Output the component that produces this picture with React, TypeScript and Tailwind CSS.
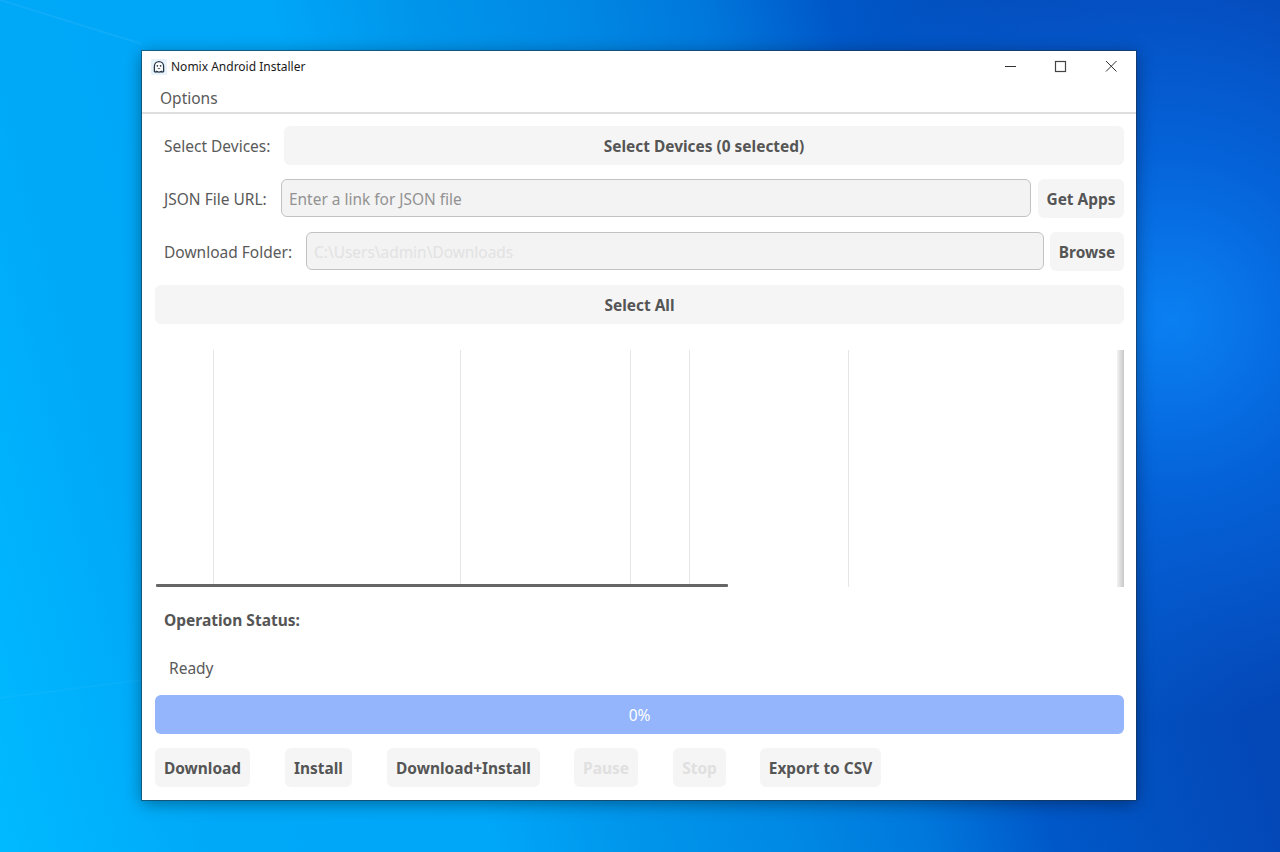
import React from "react";

const font = { fontFamily: '"Noto Sans", "Open Sans", sans-serif' };

function Btn({ children, className = "", disabled = false }: { children: React.ReactNode; className?: string; disabled?: boolean }) {
  return (
    <div
      className={
        "flex h-[39px] shrink-0 items-center justify-center rounded-[6px] bg-[#f5f5f5] pt-[2px] text-[15.45px] font-bold " +
        (disabled ? "text-[#e0e0e0] " : "text-[#555555] ") +
        className
      }
    >
      {children}
    </div>
  );
}

function Field({ text, muted }: { text: string; muted?: boolean }) {
  return (
    <div
      className={
        "flex h-[38px] min-w-0 flex-1 items-center self-start rounded-[6px] border border-[#c2c2c2] bg-[#f3f3f3] px-[7px] pt-[4px] text-[15.45px] " +
        (muted ? "text-[#e2e2e2]" : "text-[#929292]")
      }
    >
      {text}
    </div>
  );
}

export default function App() {
  return (
    <div
      className="relative h-[852px] w-[1280px] overflow-hidden bg-[radial-gradient(circle_at_1170px_320px,#0a80f2_0px,#0562d8_170px,rgba(5,85,205,0)_400px),linear-gradient(75deg,#00baff_0%,#00a8f8_15%,#00a6f8_33%,#0096ec_42%,#0088e4_53%,#0078dc_61.5%,#0058c8_70%,#0448b8_85%,#0444b4_100%)] pl-[142px] pt-[51px]"
      style={font}
    >
      <svg className="absolute left-0 top-0" width="142" height="852" viewBox="0 0 142 852">
        <path d="M0 0L142 44" stroke="#ffffff" strokeOpacity="0.06" strokeWidth="2" fill="none" />
        <path d="M0 698L142 680" stroke="#ffffff" strokeOpacity="0.03" strokeWidth="2" fill="none" />
      </svg>
      <div className="relative flex h-[749px] w-[994px] flex-col bg-white shadow-[0_0_0_1px_rgba(30,50,70,0.55),0_3px_16px_rgba(0,0,0,0.4)]">
        {/* Title bar */}
        <div className="flex h-[31px] shrink-0 items-center pl-[9px] text-[12px] text-[#1a1a1a]">
          <svg width="16" height="16" viewBox="0 0 16 16" className="mr-[4px] shrink-0">
            <rect width="16" height="16" rx="1" fill="#e8f2fb" />
            <path d="M3.4 12.5V7.2a4.6 4.6 0 0 1 9.2 0v5.3c-1 .7-2 .2-2.3-.2-.6.6-1.7.9-2.3.9s-1.7-.3-2.3-.9c-.3.4-1.3.9-2.3.2z" fill="#fff" stroke="#24364a" strokeWidth="1.3" strokeLinejoin="round" />
            <circle cx="6.4" cy="6.8" r="0.85" fill="#24364a" />
            <circle cx="9.6" cy="6.8" r="0.85" fill="#24364a" />
            <path d="M6.8 9.6h2.4" stroke="#24364a" strokeWidth="0.8" />
          </svg>
          <span>Nomix Android Installer</span>
          <div className="ml-auto flex items-center">
            <svg width="50" height="30" viewBox="0 0 50 30">
              <path d="M13 14.5h11" stroke="#333" strokeWidth="1" />
            </svg>
            <svg width="50" height="30" viewBox="0 0 50 30">
              <rect x="13.5" y="9.5" width="10" height="10" fill="none" stroke="#444" strokeWidth="1.2" />
            </svg>
            <svg width="44" height="30" viewBox="0 0 44 30">
              <path d="M14 9l10.5 10.5M24.5 9L14 19.5" stroke="#333" strokeWidth="1" fill="none" />
            </svg>
          </div>
        </div>

        {/* Menu */}
        <div className="flex h-[32px] shrink-0 items-center border-b-2 border-[#dedede] pl-[18px] pt-[4px] text-[15.5px] text-[#5a5a5a]">
          Options
        </div>

        {/* Content */}
        <div className="flex min-h-0 flex-1 flex-col pl-[13px] pr-[12px] pt-[12px]">
          <div className="flex items-center">
            <span className="w-[129px] shrink-0 pl-[9px] pt-[2px] text-[15.5px] text-[#5a5a5a]">Select Devices:</span>
            <Btn className="flex-1">Select Devices (0 selected)</Btn>
          </div>

          <div className="mt-[14px] flex items-center">
            <span className="w-[126px] shrink-0 pl-[9px] pt-[2px] text-[15.5px] text-[#5a5a5a]">JSON File URL:</span>
            <Field text="Enter a link for JSON file" />
            <Btn className="ml-[7px] w-[86px]">Get Apps</Btn>
          </div>

          <div className="mt-[14px] flex items-center">
            <span className="w-[151px] shrink-0 pl-[9px] pt-[2px] text-[15.5px] text-[#5a5a5a]">Download Folder:</span>
            <Field text="C:\Users\admin\Downloads" muted />
            <Btn className="ml-[6px] w-[74px]">Browse</Btn>
          </div>

          <Btn className="mt-[14px] w-full">Select All</Btn>

          {/* Table */}
          <div className="relative mt-[26px] flex h-[237px] w-full shrink-0">
            <div className="h-full w-[59px] shrink-0 border-r border-[#e6e6e6]" />
            <div className="h-full w-[247px] shrink-0 border-r border-[#e6e6e6]" />
            <div className="h-full w-[170px] shrink-0 border-r border-[#e6e6e6]" />
            <div className="h-full w-[59px] shrink-0 border-r border-[#e6e6e6]" />
            <div className="h-full w-[159px] shrink-0 border-r border-[#e6e6e6]" />
            <div className="absolute bottom-0 left-[1px] h-[3px] w-[572px] rounded-[1px] bg-[#666666]" />
            <div className="absolute bottom-0 right-0 top-0 w-[7px] bg-gradient-to-r from-[#f2f2f2] to-[#c8c8c8]" />
          </div>

          <div className="mt-[22px] pl-[9px] text-[15.5px] font-bold leading-[22px] text-[#555555]">Operation Status:</div>
          <div className="mt-[26px] pl-[14px] text-[15.5px] leading-[22px] text-[#5a5a5a]">Ready</div>

          <div className="mt-[16px] flex h-[39px] w-full shrink-0 items-center justify-center rounded-[6px] bg-[#94b5fb] pt-[2px] text-[15.5px] text-white">
            0%
          </div>

          <div className="mt-[14px] flex">
            <Btn className="w-[95px]">Download</Btn>
            <Btn className="ml-[35px] w-[67px]">Install</Btn>
            <Btn className="ml-[35px] w-[153px]">Download+Install</Btn>
            <Btn className="ml-[34px] w-[64px]" disabled>Pause</Btn>
            <Btn className="ml-[35px] w-[53px]" disabled>Stop</Btn>
            <Btn className="ml-[34px] w-[121px]">Export to CSV</Btn>
          </div>
        </div>
      </div>
    </div>
  );
}
